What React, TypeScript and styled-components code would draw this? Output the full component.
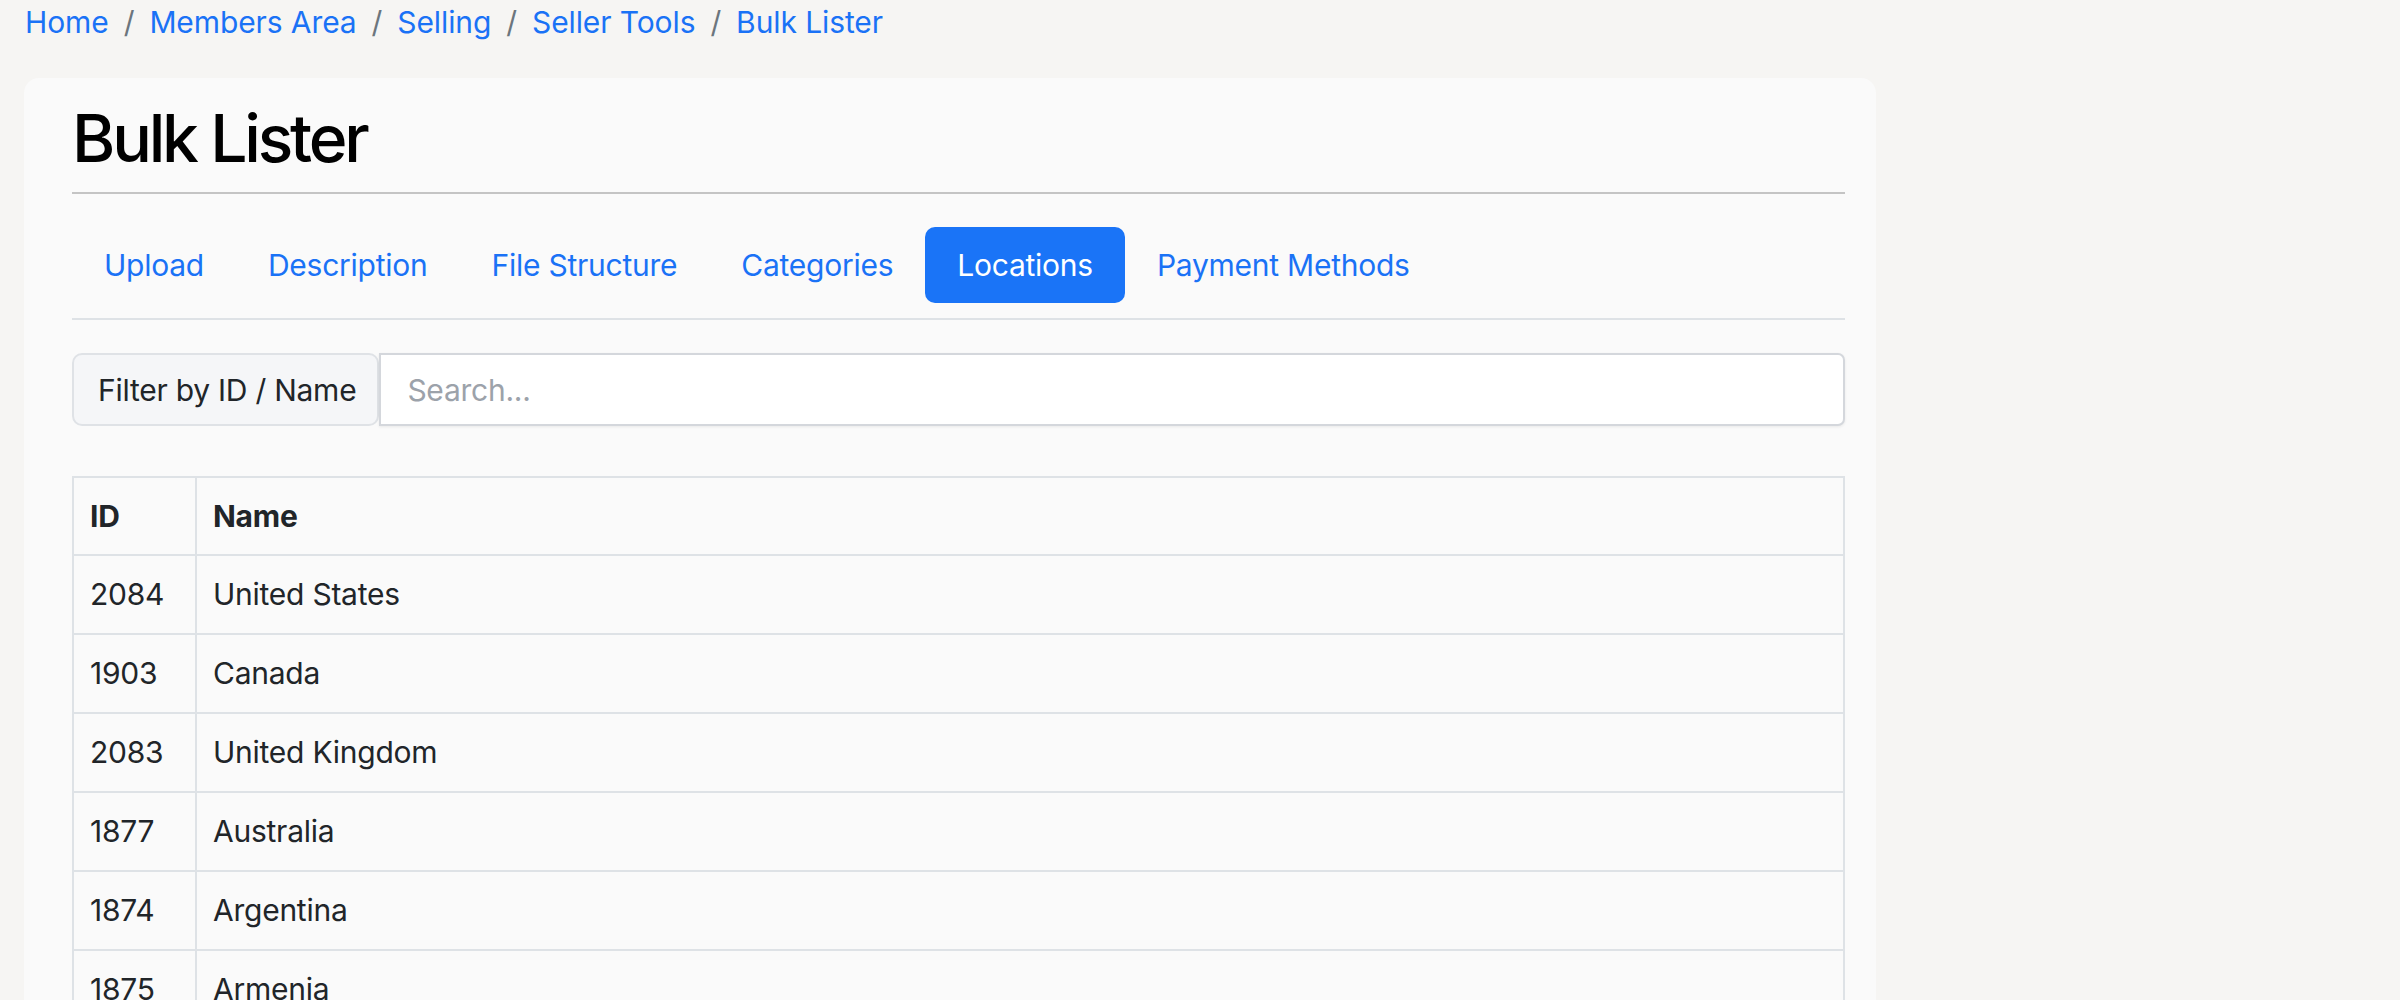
import React from "react";
import styled, { createGlobalStyle } from "styled-components";

const GlobalStyle = createGlobalStyle`
  html, body {
    margin: 0;
    padding: 0;
    background: #f6f5f3;
  }
  body {
    font-family: Inter, "Noto Sans", "Liberation Sans", sans-serif;
    font-size: 30px;
    letter-spacing: -0.25px;
    color: #212529;
  }
  * { box-sizing: border-box; }
`;

const Page = styled.div`
  padding: 0 24px 40px 24px;
`;

const Breadcrumb = styled.nav`
  display: flex;
  align-items: center;
  height: 45px;
  line-height: 45px;
  margin-bottom: 33px;
  padding-left: 1px;
  letter-spacing: -0.1px;
`;

const Crumb = styled.a`
  color: #1a72f6;
  text-decoration: none;
  white-space: nowrap;
`;

const Sep = styled.span`
  color: #6c757d;
  padding: 0 15px;
`;

const Card = styled.section`
  width: 1852px;
  background: #fafafa;
  border-radius: 15px;
  padding: 21px 31px 40px 48px;
`;

const Title = styled.h1`
  margin: 0;
  font-size: 66px;
  line-height: 79px;
  font-weight: 500;
  letter-spacing: -3.2px;
  color: #000;
`;

const Rule = styled.hr`
  margin: 14px 0 0 0;
  border: 0;
  height: 2px;
  background: #c4c4c4;
`;

const Tabs = styled.ul`
  list-style: none;
  margin: 33px 0 0 0;
  padding: 0 0 15px 0;
  display: flex;
  border-bottom: 2px solid #dee2e6;
`;

const Tab = styled.li<{ $active?: boolean }>`
  padding: 15px 32px;
  line-height: 46px;
  border-radius: 10px;
  white-space: nowrap;
  color: ${(p) => (p.$active ? "#fff" : "#1a72f6")};
  background: ${(p) => (p.$active ? "#1a74f7" : "transparent")};
  cursor: pointer;
`;

const InputGroup = styled.div`
  display: flex;
  margin-top: 33px;
  height: 73px;
`;

const GroupLabel = styled.span`
  display: flex;
  align-items: center;
  padding: 0 21px 0 24px;
  background: #f5f6f8;
  border: 2px solid #dfe2e6;
  border-radius: 10px;
  white-space: nowrap;
  color: #212529;
`;

const SearchInput = styled.input`
  flex: 1;
  min-width: 0;
  font: inherit;
  font-size: 30px;
  letter-spacing: -0.25px;
  color: #212529;
  background: #fff;
  border: 2px solid #d4d7dc;
  border-radius: 0 7px 7px 0;
  padding: 0 26px;
  outline: none;
  box-shadow: 0 1px 3px rgba(0, 0, 0, 0.07);
  &::placeholder {
    color: #9ca2aa;
  }
`;

const Table = styled.table`
  margin-top: 50px;
  width: 100%;
  border-collapse: collapse;
  table-layout: fixed;
  border: 2px solid #dee2e6;
`;

const Th = styled.th<{ $w?: number }>`
  ${(p) => (p.$w ? `width: ${p.$w}px;` : "")}
  text-align: left;
  font-weight: 700;
  padding: 16px 16px;
  line-height: 44px;
  border: 2px solid #dee2e6;
  color: #212529;
`;

const Td = styled.td`
  padding: 16px 16px;
  line-height: 45px;
  border: 2px solid #dee2e6;
  color: #212529;
`;

const crumbs = ["Home", "Members Area", "Selling", "Seller Tools", "Bulk Lister"];
const tabs = ["Upload", "Description", "File Structure", "Categories", "Locations", "Payment Methods"];
const rows: [string, string][] = [
  ["2084", "United States"],
  ["1903", "Canada"],
  ["2083", "United Kingdom"],
  ["1877", "Australia"],
  ["1874", "Argentina"],
  ["1875", "Armenia"],
  ["1878", "Austria"],
  ["1879", "Azerbaijan"],
];

export default function App() {
  return (
    <>
      <GlobalStyle />
      <Page>
        <Breadcrumb>
          {crumbs.map((c, i) => (
            <React.Fragment key={c}>
              {i > 0 && <Sep>/</Sep>}
              <Crumb href="#">{c}</Crumb>
            </React.Fragment>
          ))}
        </Breadcrumb>
        <Card>
          <Title>Bulk Lister</Title>
          <Rule />
          <Tabs>
            {tabs.map((t) => (
              <Tab key={t} $active={t === "Locations"}>
                {t}
              </Tab>
            ))}
          </Tabs>
          <InputGroup>
            <GroupLabel>Filter by ID / Name</GroupLabel>
            <SearchInput placeholder="Search..." />
          </InputGroup>
          <Table>
            <thead>
              <tr>
                <Th $w={123}>ID</Th>
                <Th>Name</Th>
              </tr>
            </thead>
            <tbody>
              {rows.map(([id, name]) => (
                <tr key={id}>
                  <Td>{id}</Td>
                  <Td>{name}</Td>
                </tr>
              ))}
            </tbody>
          </Table>
        </Card>
      </Page>
    </>
  );
}
